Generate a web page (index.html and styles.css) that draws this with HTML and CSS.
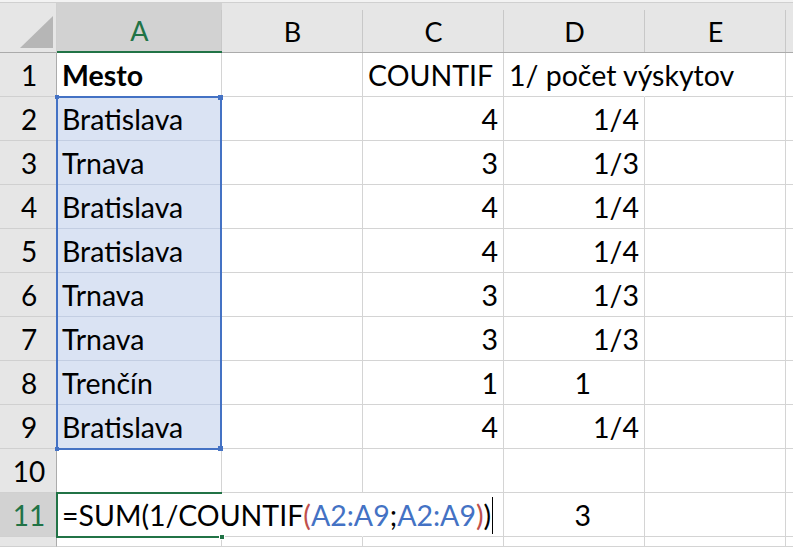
FILE: index.html
```html
<!DOCTYPE html>
<html lang="sk">
<head>
<meta charset="utf-8">
<title>Excel – COUNTIF</title>
<link rel="stylesheet" href="styles.css">
</head>
<body>
<div class="topbar"></div>
<div class="sheet">
  <div class="corner"><svg class="tri" width="56" height="49" viewBox="0 0 56 49"><polygon points="20,45 53,45 53,13" fill="#b6b6b6"/></svg></div>
  <div class="colhead sel">A</div>
  <div class="colhead">B</div>
  <div class="colhead">C</div>
  <div class="colhead">D</div>
  <div class="colhead">E</div>
  <div class="colhead"></div>

  <div class="rowhead">1</div>
  <div class="cell bold">Mesto</div>
  <div class="cell"></div>
  <div class="cell">COUNTIF</div>
  <div class="cell flow">1/ počet výskytov</div>
  <div class="cell"></div>
  <div class="cell"></div>

  <div class="rowhead">2</div>
  <div class="cell rng">Bratislava</div>
  <div class="cell"></div>
  <div class="cell num">4</div>
  <div class="cell num">1/4</div>
  <div class="cell"></div>
  <div class="cell"></div>

  <div class="rowhead">3</div>
  <div class="cell rng">Trnava</div>
  <div class="cell"></div>
  <div class="cell num">3</div>
  <div class="cell num">1/3</div>
  <div class="cell"></div>
  <div class="cell"></div>

  <div class="rowhead">4</div>
  <div class="cell rng">Bratislava</div>
  <div class="cell"></div>
  <div class="cell num">4</div>
  <div class="cell num">1/4</div>
  <div class="cell"></div>
  <div class="cell"></div>

  <div class="rowhead">5</div>
  <div class="cell rng">Bratislava</div>
  <div class="cell"></div>
  <div class="cell num">4</div>
  <div class="cell num">1/4</div>
  <div class="cell"></div>
  <div class="cell"></div>

  <div class="rowhead">6</div>
  <div class="cell rng">Trnava</div>
  <div class="cell"></div>
  <div class="cell num">3</div>
  <div class="cell num">1/3</div>
  <div class="cell"></div>
  <div class="cell"></div>

  <div class="rowhead">7</div>
  <div class="cell rng">Trnava</div>
  <div class="cell"></div>
  <div class="cell num">3</div>
  <div class="cell num">1/3</div>
  <div class="cell"></div>
  <div class="cell"></div>

  <div class="rowhead">8</div>
  <div class="cell rng">Trenčín</div>
  <div class="cell"></div>
  <div class="cell num">1</div>
  <div class="cell num whole">1</div>
  <div class="cell"></div>
  <div class="cell"></div>

  <div class="rowhead">9</div>
  <div class="cell rng">Bratislava</div>
  <div class="cell"></div>
  <div class="cell num">4</div>
  <div class="cell num">1/4</div>
  <div class="cell"></div>
  <div class="cell"></div>

  <div class="rowhead">10</div>
  <div class="cell"></div>
  <div class="cell"></div>
  <div class="cell"></div>
  <div class="cell"></div>
  <div class="cell"></div>
  <div class="cell"></div>

  <div class="rowhead sel">11</div>
  <div class="cell flow edit">=SUM(1/COUNTIF<span class="paren">(</span><span class="ref">A2:A9</span>;<span class="ref">A2:A9</span><span class="paren">)</span>)<span class="caret"></span></div>
  <div class="cell flow"></div>
  <div class="cell"></div>
  <div class="cell num whole">3</div>
  <div class="cell"></div>
  <div class="cell"></div>

  <div class="rowhead"></div>
  <div class="cell"></div>
  <div class="cell"></div>
  <div class="cell"></div>
  <div class="cell"></div>
  <div class="cell"></div>
  <div class="cell"></div>

  <div class="range-box">
    <span class="h h-tl"></span><span class="h h-tr"></span><span class="h h-bl"></span><span class="h h-br"></span>
  </div>
  <div class="active-box"><span class="fill"></span></div>
</div>
</body>
</html>
```

FILE: styles.css
```css
* { box-sizing: border-box; }

html, body {
  margin: 0;
  padding: 0;
  height: 100%;
  overflow: hidden;
  background: #ffffff;
}

body {
  font-family: Lato, "Open Sans", sans-serif;
  color: #000;
}

.topbar {
  height: 3px;
  background: #f3f3f3;
  border-bottom: 1px solid #d0d0d0;
}

.sheet {
  position: relative;
  display: grid;
  grid-template-columns: 57px 165px 141px 141px 141px 141px 1fr;
  grid-template-rows: 50px repeat(11, 44px) 1fr;
  height: calc(100vh - 3px);
}

.corner {
  background: #e6e6e6;
  border-bottom: 1px solid #ababab;
  border-right: 1px solid #d0d0d0;
}
.tri { display: block; }

.colhead {
  background-color: #e6e6e6;
  background-image: linear-gradient(#c8c8c8, #c8c8c8);
  background-size: 1px calc(100% - 7px);
  background-position: right bottom;
  background-repeat: no-repeat;
  border-bottom: 1px solid #ababab;
  font-size: 27px;
  text-align: center;
  padding-top: 8px;
  line-height: 41px;
}
.colhead.sel {
  background-color: #d2d2d2;
  color: #217346;
  border-bottom: 2px solid #217346;
  line-height: 40px;
}

.rowhead {
  background: #e6e6e6;
  border-right: 1px solid #ababab;
  border-bottom: 1px solid #d0d0d0;
  font-size: 28px;
  text-align: center;
  padding-top: 1px;
  line-height: 42px;
  padding-left: 2px;
}
.rowhead.sel {
  background: #d2d2d2;
  color: #217346;
}

.cell {
  border-right: 1px solid #d4d4d4;
  border-bottom: 1px solid #d4d4d4;
  font-size: 28.5px;
  padding: 1px 5px 0 5px;
  line-height: 42px;
  white-space: nowrap;
  overflow: visible;
}
.cell.bold { font-weight: 700; }
.cell.flow { border-right-color: transparent; }
.cell.num { text-align: right; }
.cell.num.whole { padding-right: 53px; }
.cell.rng {
  background: #dae3f3;
  border-bottom-color: #c3cee2;
}
.cell.edit { z-index: 2; }

.paren { color: #c0504d; }
.ref { color: #4472c4; }
.caret {
  display: inline-block;
  width: 1px;
  height: 37px;
  background: #000;
  vertical-align: -8px;
  margin-left: 1px;
}

.range-box {
  position: absolute;
  grid-column: 2 / 3;
  grid-row: 3 / 11;
  top: -1px;
  bottom: -1px;
  left: -1px;
  right: 0;
  border: 2px solid #4472c4;
  z-index: 3;
}
.h {
  position: absolute;
  width: 5px;
  height: 5px;
  background: #4472c4;
}
.h-tl { left: -3px; top: -3px; width: 4px; height: 4px; }
.h-tr { right: -3px; top: -3px; }
.h-bl { left: -3px; bottom: -3px; width: 4px; height: 4px; }
.h-br { right: -3px; bottom: -3px; }

.active-box {
  position: absolute;
  grid-column: 2 / 3;
  grid-row: 12 / 13;
  top: -1px;
  bottom: -1px;
  left: -1px;
  right: 0;
  border: 2px solid #217346;
  border-right: none;
  z-index: 3;
}
.fill {
  position: absolute;
  right: -3px;
  bottom: -4px;
  width: 6px;
  height: 6px;
  background: #217346;
  border: 1px solid #fff;
}
```
